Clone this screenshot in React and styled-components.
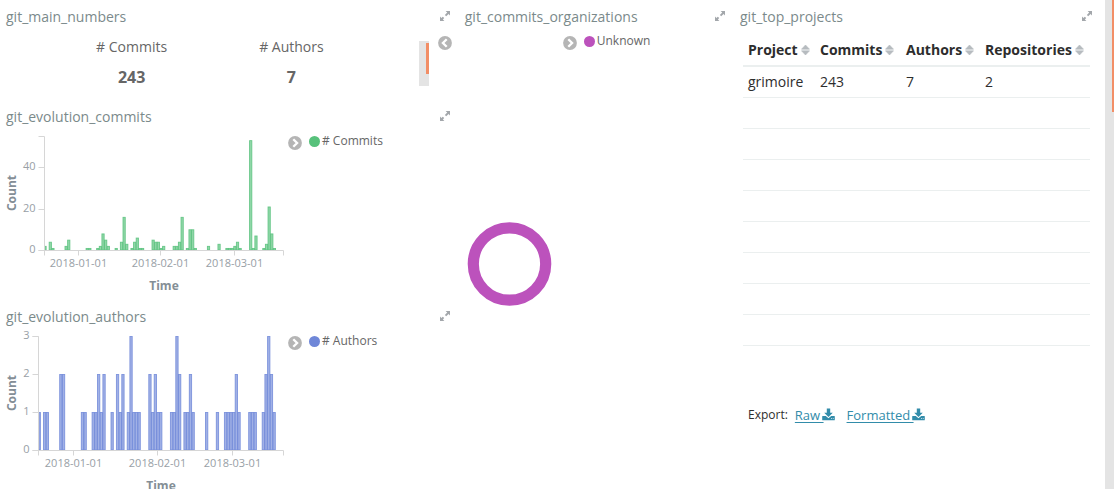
import React from 'react';
import styled, { createGlobalStyle } from 'styled-components';

const GlobalStyle = createGlobalStyle`
  *, *::before, *::after { box-sizing: border-box; }
  body {
    margin: 0;
    background: #fff;
    color: #2d2d2d;
    font-family: "Open Sans", "Liberation Sans", sans-serif;
    font-size: 14px;
  }
`;

const Page = styled.div`
  display: flex;
  height: 100vh;
  overflow: hidden;
`;

const Dashboard = styled.main`
  flex: 1;
  min-width: 0;
  display: grid;
  grid-template-columns: 5fr 3fr 4fr;
  align-items: start;
  padding-right: 4px;
`;

const Column = styled.div`
  min-width: 0;
`;

const ScrollTrack = styled.div`
  display: flex;
  flex: none;
  justify-content: flex-end;
  align-items: flex-start;
  width: ${(p) => p.$width}px;
  padding-top: ${(p) => p.$inset || 0}px;
  background: #e4e4e4;
`;

const ScrollThumb = styled.div`
  width: ${(p) => p.$width}px;
  height: ${(p) => p.$height};
  background: #f28e66;
`;

const PanelBox = styled.section`
  display: flex;
  flex-direction: column;
  min-height: ${(p) => p.$height}px;
`;

const PanelHeader = styled.header`
  display: flex;
  align-items: center;
  justify-content: space-between;
  height: 32px;
  padding: 0 8px 0 6px;
`;

const PanelTitle = styled.h2`
  margin: 0;
  color: #7b8a8b;
  font-size: 14px;
  font-weight: 400;
  line-height: 20px;
  padding-top: 2px;
`;

const IconButton = styled.button`
  display: flex;
  flex: none;
  padding: 0;
  border: 0;
  background: none;
  color: ${(p) => p.$color || '#b5b5b5'};
  cursor: pointer;
`;

const MetricBody = styled.div`
  display: flex;
  align-items: flex-start;
  gap: 9px;
  padding: 4px 7px 0 10px;
`;

const MetricList = styled.div`
  flex: 1;
  display: flex;
  justify-content: center;
  gap: 92px;
`;

const Metric = styled.div`
  display: flex;
  flex-direction: column;
  gap: 8px;
  text-align: center;
  color: #666;
  line-height: 22px;
`;

const MetricValue = styled.strong`
  font-size: 16px;
`;

const MetricScroll = styled.div`
  display: flex;
  height: 45px;
  margin-top: 5px;
`;

const ChartBody = styled.div`
  display: flex;
  align-items: flex-start;
`;

const Chart = styled.svg`
  flex: none;
  display: block;
  overflow: visible;
  font-family: "Open Sans", "Liberation Sans", sans-serif;
`;

const Legend = styled.div`
  display: flex;
  align-items: flex-start;
  gap: 7px;
`;

const LegendItem = styled.div`
  display: flex;
  align-items: center;
  gap: 2px;
  color: #666;
  font-size: 12px;
  line-height: 18px;
`;

const Dot = styled.span`
  width: 11px;
  height: 11px;
  border-radius: 50%;
  background: ${(p) => p.$color};
`;

const LegendToggle = styled(IconButton)`
  padding-top: 4px;
`;

const PieBody = styled.div`
  display: grid;
  grid-template-columns: 104px 1fr;
`;

const PieSlot = styled.div`
  padding: 189px 0 0 8px;
`;

const TableBody = styled.div`
  padding: 2px 11px 0 9px;
`;

const Table = styled.table`
  width: 100%;
  border-collapse: collapse;
  line-height: 20px;
`;

const HeadCell = styled.th`
  height: 32px;
  padding: 0 0 0 5px;
  border-bottom: 2px solid #ebefef;
  text-align: left;
  font-weight: 700;
  white-space: nowrap;
  width: ${(p) => p.$width};
`;

const SortLabel = styled.span`
  display: flex;
  align-items: center;
  gap: 3px;
  color: #2d2d2d;
`;

const Cell = styled.td`
  height: 31px;
  padding: 0 0 0 5px;
  border-bottom: 1px solid #ebefef;
`;

const ExportRow = styled.div`
  display: flex;
  align-items: center;
  gap: 7px;
  padding: 60px 5px 0;
  font-size: 12px;
  line-height: 18px;
`;

const ExportLink = styled.a`
  display: flex;
  align-items: center;
  margin-right: 5px;
  color: #328caa;
  font-size: 13px;
  text-decoration: none;

  span {
    text-decoration: underline;
    text-underline-offset: 2px;
    white-space: pre;
  }

  svg {
    margin-left: -2px;
  }
`;

const ExpandIcon = () => (
  <svg width="12" height="12" viewBox="0 0 12 12" aria-hidden="true">
    <g fill="currentColor">
      <path d="M6.6 1H11v4.4L9.6 4 7.2 6.2 5.9 4.9 8.2 2.5z" />
      <path d="M5.4 11H1V6.6L2.4 8l1.4-1.3 1.4 1.4L3.9 9.5z" />
    </g>
  </svg>
);

const CircleChevron = ({ left }) => (
  <svg width="14" height="14" viewBox="0 0 14 14" aria-hidden="true">
    <circle cx="7" cy="7" r="6.9" fill="currentColor" />
    <path
      d={left ? 'M8.7 3.2 4.9 7l3.8 3.8' : 'M5.3 3.2 9.1 7l-3.8 3.8'}
      fill="none"
      stroke="#fff"
      strokeWidth="2.3"
    />
  </svg>
);

const SortIcon = () => (
  <svg width="9" height="12" viewBox="0 0 9 12" aria-hidden="true">
    <path d="M4.5 1 8.5 5.2h-8zM4.5 11 8.5 6.8h-8z" fill="#b6bbbf" stroke="#b6bbbf" strokeWidth=".6" strokeLinejoin="round" />
  </svg>
);

const DownloadIcon = () => (
  <svg width="13" height="13" viewBox="0 0 13 13" aria-hidden="true">
    <path d="M4.8 .6h3.4v4.2h2.6L6.5 9.1 2.2 4.8h2.6z" fill="currentColor" />
    <path d="M.6 7.9h3.2l2.7 2.4 2.7-2.4h3.2q.4 0 .4.5v3.3q0 .6-.5.6H.7q-.5 0-.5-.6V8.4q0-.5.4-.5z" fill="currentColor" />
    <path d="M9 10.5h.8M10.8 10.5h.8" stroke="#fff" strokeWidth=".8" />
  </svg>
);

const Panel = ({ title, height, children }) => (
  <PanelBox $height={height}>
    <PanelHeader>
      <PanelTitle>{title}</PanelTitle>
      <IconButton type="button" aria-label={`Expand ${title}`} $color="#a3a7ab">
        <ExpandIcon />
      </IconButton>
    </PanelHeader>
    {children}
  </PanelBox>
);

const ChartLegend = ({ label, color }) => (
  <Legend>
    <LegendToggle type="button" aria-label="Toggle legend">
      <CircleChevron />
    </LegendToggle>
    <LegendItem>
      <Dot $color={color} />
      {label}
    </LegendItem>
  </Legend>
);

// Each entry is [day index, count].
const commits = [
  [0, 2], [2, 4], [3, 1], [8, 2], [9, 5], [16, 1], [17, 1], [20, 1], [21, 2], [22, 8], [23, 5], [24, 2],
  [27, 1], [29, 4], [30, 16], [31, 3], [33, 1], [34, 4], [35, 6], [36, 1], [37, 1], [41, 5], [42, 4],
  [43, 4], [44, 1], [45, 2], [49, 2], [50, 2], [51, 4], [52, 16], [54, 1], [55, 10], [56, 10], [57, 1],
  [62, 2], [66, 3], [69, 1], [70, 1], [71, 1], [72, 2], [73, 4], [74, 1], [78, 53], [79, 1], [80, 7],
  [83, 1], [84, 3], [85, 21], [86, 8], [87, 1],
];

const authors = [
  [0, 1], [2, 1], [3, 1], [8, 2], [9, 2], [16, 1], [17, 1], [20, 1], [21, 1], [22, 2], [23, 1], [24, 2],
  [27, 1], [29, 2], [30, 1], [31, 2], [33, 1], [34, 3], [35, 1], [36, 1], [37, 1], [41, 2], [42, 1],
  [43, 2], [44, 1], [45, 1], [49, 1], [50, 1], [51, 3], [52, 2], [54, 1], [55, 1], [56, 2], [57, 1],
  [62, 1], [66, 1], [69, 1], [70, 1], [71, 1], [72, 1], [73, 2], [74, 1], [78, 1], [79, 1], [80, 1],
  [83, 1], [84, 2], [85, 3], [86, 2], [87, 1],
];

const PLOT_TOP = 4.5;
const PLOT_BASE = 118.5;
const PLOT_RIGHT = 283.5;

const BarChart = ({ data, color, left, origin, step, max, yTicks, xTicks, label }) => {
  const y = (v) => PLOT_BASE - (v / max) * (PLOT_BASE - PLOT_TOP);
  return (
    <Chart width="288" height="168" role="img" aria-label={label}>
      {data.map(([day, value]) => {
        const x = Math.max(origin + day * step, left);
        const right = origin + (day + 1) * step;
        return (
          <rect
            key={day}
            x={x + 0.4}
            y={y(value)}
            width={right - x - 0.4}
            height={PLOT_BASE - y(value) - 0.5}
            fill={color}
            fillOpacity="0.65"
            stroke={color}
            strokeOpacity="0.85"
            strokeWidth="0.9"
          />
        );
      })}
      <path
        d={`M${left - 6} ${PLOT_TOP}H${left}V${PLOT_BASE + 5}M${left - 6} ${PLOT_BASE}H${PLOT_RIGHT}V${PLOT_BASE + 5}`}
        fill="none"
        stroke="#d6d6d6"
      />
      {yTicks.map((t) => (
        <g key={t}>
          <path d={`M${left - 6} ${Math.floor(y(t)) + 0.5}H${left}`} stroke="#d6d6d6" />
          <text x={left - 9} y={Math.floor(y(t)) + 3} textAnchor="end" fontSize="11" fill="#98a0a6">{t}</text>
        </g>
      ))}
      {xTicks.map(([x, text]) => (
        <g key={text}>
          <path d={`M${x} ${PLOT_BASE}v5`} stroke="#d6d6d6" />
          <text x={x} y="135" textAnchor="middle" fontSize="11" fill="#98a0a6">{text}</text>
        </g>
      ))}
      <text transform="translate(16 61) rotate(-90)" textAnchor="middle" fontSize="12" fontWeight="700" fill="#848e96">Count</text>
      <text x={(left + PLOT_RIGHT) / 2} y="158" textAnchor="middle" fontSize="12" fontWeight="700" fill="#848e96">Time</text>
    </Chart>
  );
};

const columns = [
  ['Project', '72px'],
  ['Commits', '86px'],
  ['Authors', '79px'],
  ['Repositories', 'auto'],
];
const rows = [['grimoire', '243', '7', '2'], ...Array.from({ length: 8 }, () => ['', '', '', ''])];

export default function App() {
  return (
    <Page>
      <GlobalStyle />
      <Dashboard>
        <Column>
          <Panel title="git_main_numbers" height={100}>
            <MetricBody>
              <MetricList>
                <Metric>
                  <span># Commits</span>
                  <MetricValue>243</MetricValue>
                </Metric>
                <Metric>
                  <span># Authors</span>
                  <MetricValue>7</MetricValue>
                </Metric>
              </MetricList>
              <MetricScroll>
                <ScrollTrack $width={10} $inset={2}>
                  <ScrollThumb $width={3} $height="31px" />
                </ScrollTrack>
              </MetricScroll>
              <IconButton type="button" aria-label="Toggle legend">
                <CircleChevron left />
              </IconButton>
            </MetricBody>
          </Panel>
          <Panel title="git_evolution_commits" height={200}>
            <ChartBody>
              <BarChart
                label="Commits over time"
                data={commits}
                color="#57c17b"
                left={44.5}
                origin={43.5}
                step={2.637}
                max={55}
                yTicks={[0, 20, 40]}
                xTicks={[[78.5, '2018-01-01'], [160.5, '2018-02-01'], [234.5, '2018-03-01']]}
              />
              <ChartLegend label="# Commits" color="#57c17b" />
            </ChartBody>
          </Panel>
          <Panel title="git_evolution_authors" height={200}>
            <ChartBody>
              <BarChart
                label="Authors over time"
                data={authors}
                color="#6f87d8"
                left={38.5}
                origin={37.7}
                step={2.7}
                max={3}
                yTicks={[0, 1, 2, 3]}
                xTicks={[[73.5, '2018-01-01'], [157.5, '2018-02-01'], [232.5, '2018-03-01']]}
              />
              <ChartLegend label="# Authors" color="#6f87d8" />
            </ChartBody>
          </Panel>
        </Column>
        <Column>
          <Panel title="git_commits_organizations" height={489}>
            <PieBody>
              <PieSlot>
                <Chart width="86" height="86" role="img" aria-label="Unknown: all commits">
                  <circle cx="42.5" cy="43" r="36.2" fill="none" stroke="#bc52bc" strokeWidth="11.2" />
                </Chart>
              </PieSlot>
              <ChartLegend label="Unknown" color="#bc52bc" />
            </PieBody>
          </Panel>
        </Column>
        <Column>
          <Panel title="git_top_projects" height={489}>
            <TableBody>
              <Table>
                <thead>
                  <tr>
                    {columns.map(([name, width]) => (
                      <HeadCell key={name} scope="col" $width={width}>
                        <SortLabel>
                          {name}
                          <SortIcon />
                        </SortLabel>
                      </HeadCell>
                    ))}
                  </tr>
                </thead>
                <tbody>
                  {rows.map((row, r) => (
                    <tr key={r}>
                      {row.map((value, c) => (
                        <Cell key={c}>{value}</Cell>
                      ))}
                    </tr>
                  ))}
                </tbody>
              </Table>
              <ExportRow>
                Export:
                <ExportLink href="#raw">
                  <span>Raw </span>
                  <DownloadIcon />
                </ExportLink>
                <ExportLink href="#formatted">
                  <span>Formatted </span>
                  <DownloadIcon />
                </ExportLink>
              </ExportRow>
            </TableBody>
          </Panel>
        </Column>
      </Dashboard>
      <ScrollTrack $width={9}>
        <ScrollThumb $width={2} $height="112px" />
      </ScrollTrack>
    </Page>
  );
}
